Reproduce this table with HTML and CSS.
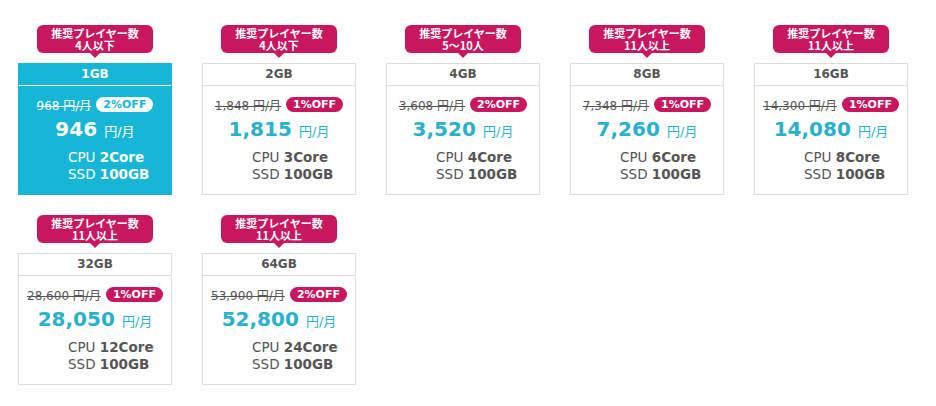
FILE: index.html
```html
<!DOCTYPE html>
<html lang="ja">
<head>
<meta charset="utf-8">
<link rel="stylesheet" href="styles.css">
</head>
<body>
<div class="plans">
  <div class="plan">
    <div class="badge">推奨プレイヤー数<br>4人以下</div>
    <div class="card active">
      <div class="card-head">1GB</div>
      <div class="card-body">
        <div class="old"><s>968 円/月</s><span class="off">2%OFF</span></div>
        <div class="price"><b>946</b> 円/月</div>
        <div class="specs"><div>CPU <b>2Core</b></div><div>SSD <b>100GB</b></div></div>
      </div>
    </div>
  </div>
  <div class="plan">
    <div class="badge">推奨プレイヤー数<br>4人以下</div>
    <div class="card">
      <div class="card-head">2GB</div>
      <div class="card-body">
        <div class="old"><s>1,848 円/月</s><span class="off">1%OFF</span></div>
        <div class="price"><b>1,815</b> 円/月</div>
        <div class="specs"><div>CPU <b>3Core</b></div><div>SSD <b>100GB</b></div></div>
      </div>
    </div>
  </div>
  <div class="plan">
    <div class="badge">推奨プレイヤー数<br>5～10人</div>
    <div class="card">
      <div class="card-head">4GB</div>
      <div class="card-body">
        <div class="old"><s>3,608 円/月</s><span class="off">2%OFF</span></div>
        <div class="price"><b>3,520</b> 円/月</div>
        <div class="specs"><div>CPU <b>4Core</b></div><div>SSD <b>100GB</b></div></div>
      </div>
    </div>
  </div>
  <div class="plan">
    <div class="badge">推奨プレイヤー数<br>11人以上</div>
    <div class="card">
      <div class="card-head">8GB</div>
      <div class="card-body">
        <div class="old"><s>7,348 円/月</s><span class="off">1%OFF</span></div>
        <div class="price"><b>7,260</b> 円/月</div>
        <div class="specs"><div>CPU <b>6Core</b></div><div>SSD <b>100GB</b></div></div>
      </div>
    </div>
  </div>
  <div class="plan">
    <div class="badge">推奨プレイヤー数<br>11人以上</div>
    <div class="card">
      <div class="card-head">16GB</div>
      <div class="card-body">
        <div class="old"><s>14,300 円/月</s><span class="off">1%OFF</span></div>
        <div class="price"><b>14,080</b> 円/月</div>
        <div class="specs"><div>CPU <b>8Core</b></div><div>SSD <b>100GB</b></div></div>
      </div>
    </div>
  </div>
  <div class="plan">
    <div class="badge">推奨プレイヤー数<br>11人以上</div>
    <div class="card">
      <div class="card-head">32GB</div>
      <div class="card-body">
        <div class="old"><s>28,600 円/月</s><span class="off">1%OFF</span></div>
        <div class="price"><b>28,050</b> 円/月</div>
        <div class="specs"><div>CPU <b>12Core</b></div><div>SSD <b>100GB</b></div></div>
      </div>
    </div>
  </div>
  <div class="plan">
    <div class="badge">推奨プレイヤー数<br>11人以上</div>
    <div class="card">
      <div class="card-head">64GB</div>
      <div class="card-body">
        <div class="old"><s>53,900 円/月</s><span class="off">2%OFF</span></div>
        <div class="price"><b>52,800</b> 円/月</div>
        <div class="specs"><div>CPU <b>24Core</b></div><div>SSD <b>100GB</b></div></div>
      </div>
    </div>
  </div>
</div>
</body>
</html>
```
FILE: styles.css
```css
* { box-sizing: border-box; }
html, body { margin: 0; background: #fff; }
body {
  font-family: "DejaVu Sans", "Noto Sans CJK JP", sans-serif;
  color: #555;
}
.plans {
  display: grid;
  grid-template-columns: repeat(5, 154px);
  column-gap: 30px;
  row-gap: 20px;
  padding: 25px 0 0 18px;
}
.plan {
  display: flex;
  flex-direction: column;
  align-items: center;
}
.badge {
  position: relative;
  width: 116px;
  height: 28px;
  background: #c8175f;
  color: #fff;
  border-radius: 6px;
  font-family: "Noto Sans CJK JP", sans-serif;
  font-weight: 700;
  font-size: 11px;
  line-height: 12px;
  text-align: center;
  padding-top: 2px;
  margin-bottom: 10px;
}
.badge::after {
  content: "";
  position: absolute;
  left: 50%;
  bottom: -5px;
  margin-left: -5px;
  border-left: 5px solid transparent;
  border-right: 5px solid transparent;
  border-top: 5px solid #c8175f;
}
.card {
  width: 154px;
  height: 132px;
  border: 1px solid #dcdcdc;
  background: #fff;
}
.card.active {
  background: #17b6d6;
  border-color: #17b6d6;
  color: #fff;
}
.card-head {
  height: 22px;
  line-height: 21px;
  text-align: center;
  font-size: 12px;
  font-weight: 700;
  border-bottom: 1px solid #dcdcdc;
}
.card.active .card-head { border-bottom-color: #fff; }
.card-body { padding-top: 10px; }
.old {
  display: flex;
  justify-content: center;
  align-items: center;
  gap: 5px;
  font-size: 12px;
  height: 16px;
}
.old s { text-decoration-thickness: 1px; }
.off {
  background: #c8175f;
  color: #fff;
  font-weight: 700;
  font-size: 11px;
  line-height: 15px;
  height: 15px;
  padding: 0 7px;
  border-radius: 8px;
}
.card.active .off { background: #fff; color: #17b6d6; }
.price {
  text-align: center;
  color: #29b0cd;
  font-size: 13px;
  margin-top: 4px;
  height: 26px;
  line-height: 26px;
}
.price b { font-size: 20px; margin-right: 3px; }
.card.active .price { color: #fff; }
.specs {
  padding-left: 49px;
  margin-top: 7px;
  font-size: 13.5px;
  line-height: 17px;
}
```
